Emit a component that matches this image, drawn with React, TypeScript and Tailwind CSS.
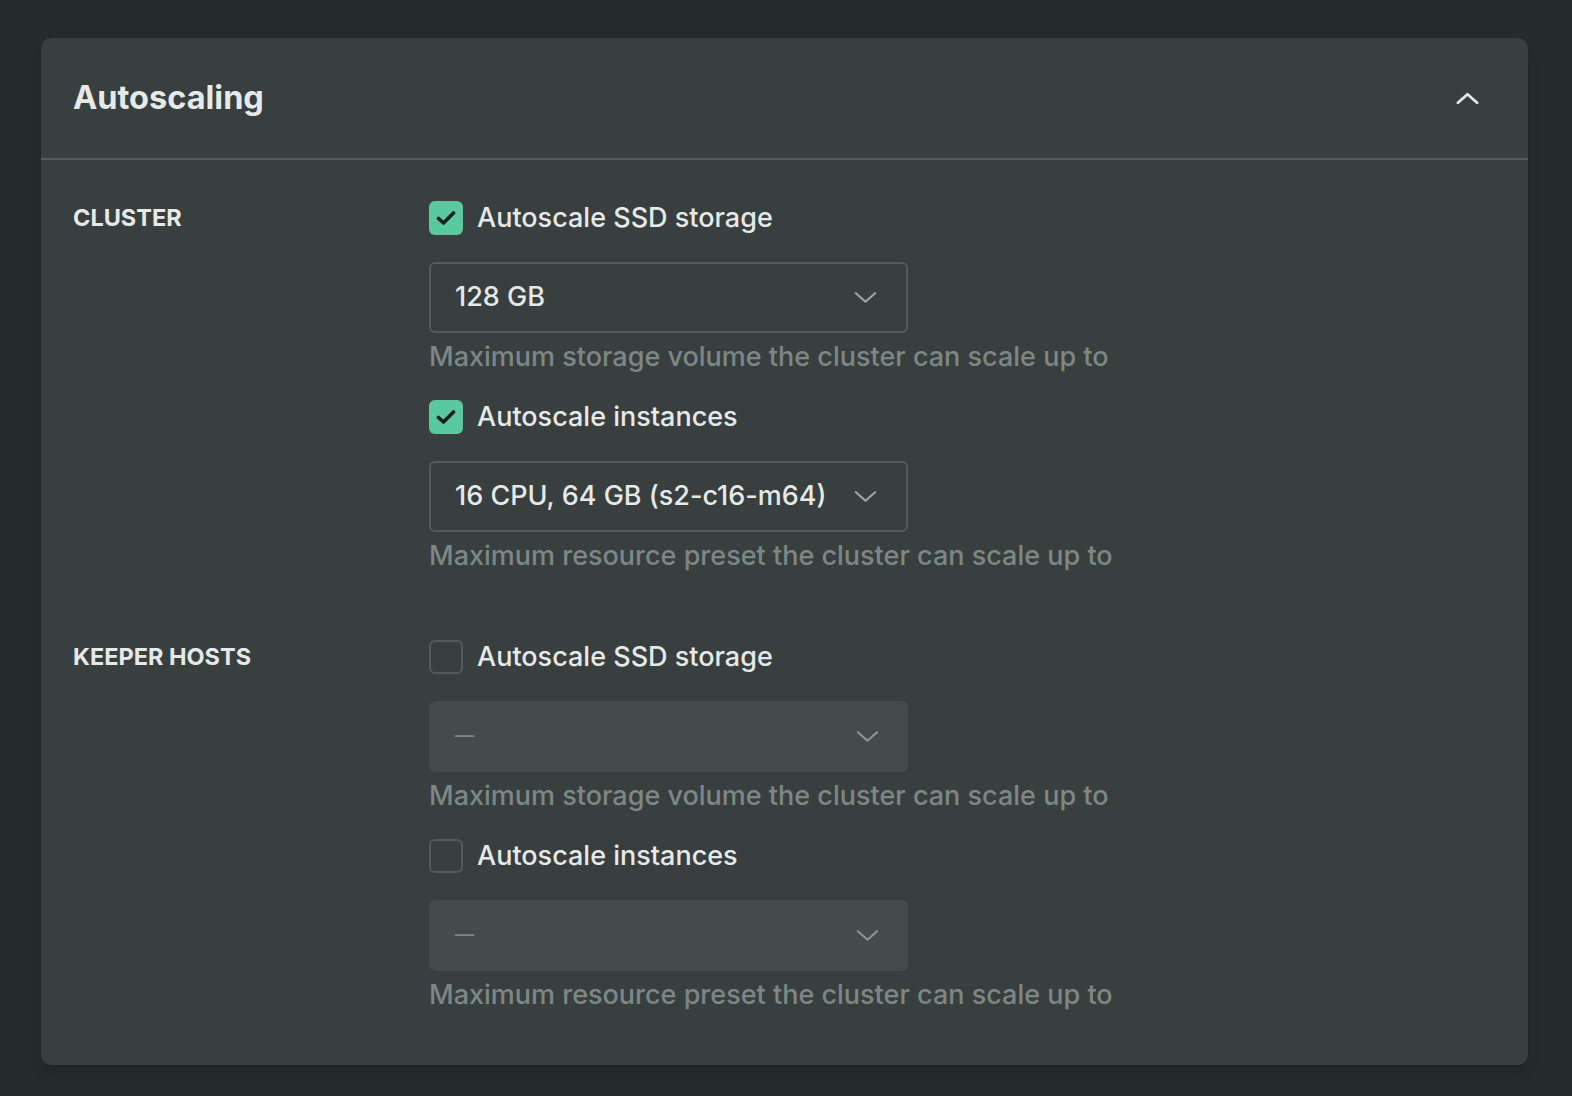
import React, { useState } from 'react';

type Field = {
  label: string;
  checked: boolean;
  value: string;
  hint: string;
};

const sections: { title: string; fields: Field[] }[] = [
  {
    title: 'Cluster',
    fields: [
      { label: 'Autoscale SSD storage', checked: true, value: '128 GB', hint: 'Maximum storage volume the cluster can scale up to' },
      { label: 'Autoscale instances', checked: true, value: '16 CPU, 64 GB (s2-c16-m64)', hint: 'Maximum resource preset the cluster can scale up to' },
    ],
  },
  {
    title: 'Keeper hosts',
    fields: [
      { label: 'Autoscale SSD storage', checked: false, value: '—', hint: 'Maximum storage volume the cluster can scale up to' },
      { label: 'Autoscale instances', checked: false, value: '—', hint: 'Maximum resource preset the cluster can scale up to' },
    ],
  },
];

const Chevron: React.FC<{ up?: boolean; className?: string; strokeWidth?: number }> = ({ up, className, strokeWidth = 2 }) => (
  <svg viewBox="0 0 24 12" className={className} fill="none" stroke="currentColor" strokeWidth={strokeWidth} strokeLinecap="round" strokeLinejoin="round">
    {up ? <polyline points="2,11 12,2 22,11" /> : <polyline points="2,1 12,10 22,1" />}
  </svg>
);

const FieldRow: React.FC<{ field: Field }> = ({ field }) => {
  const [checked, setChecked] = useState(field.checked);

  return (
    <div className="flex flex-col">
      <label className="flex items-center gap-[14px] h-[34px] cursor-pointer" onClick={() => setChecked(!checked)}>
        <span
          className={
            checked
              ? 'w-[34px] h-[34px] rounded-[6px] bg-[#5ac99f] flex items-center justify-center'
              : 'w-[34px] h-[34px] rounded-[6px] border-2 border-[#535a5a] flex items-center justify-center'
          }
        >
          {checked && (
            <svg viewBox="0 0 20 16" className="w-[20px] h-[16px]" fill="none" stroke="#1b2020" strokeWidth={3.6} strokeLinecap="round" strokeLinejoin="round">
              <polyline points="2.5,8.5 7.5,13 17.5,3" />
            </svg>
          )}
        </span>
        <span className="text-[27px] font-medium text-[#e6e9e9]">{field.label}</span>
      </label>

      {checked ? (
        <div className="mt-[27px] w-[479px] h-[71px] rounded-[6px] border-2 border-[#555c5c] flex items-center justify-between pl-[24px] pr-[29px]">
          <span className="text-[27px] font-medium text-[#e6e9e9]">{field.value}</span>
          <Chevron className="w-[23px] h-[12px] text-[#a0a8a7]" strokeWidth={2.2} />
        </div>
      ) : (
        <div className="mt-[27px] w-[479px] h-[71px] rounded-[6px] bg-[#444b4b] flex items-center justify-between pl-[26px] pr-[29px]">
          <span className="text-[19px] font-medium text-[#7f8887]">{field.value}</span>
          <Chevron className="w-[23px] h-[12px] text-[#8d9594]" strokeWidth={2.2} />
        </div>
      )}

      <p className="mt-[7px] text-[27px] font-medium leading-[34px] text-[#7d8786]">{field.hint}</p>
    </div>
  );
};

export default function App() {
  const [open, setOpen] = useState(true);

  return (
    <div className="min-h-[1096px] bg-[#252a2a] pl-[41px] pr-[44px] pt-[38px] pb-[32px] font-['Inter','Noto_Sans',sans-serif]">
      <div className="bg-[#383f3e] rounded-[10px] shadow-lg">
        {/* Header */}
        <div className="h-[122px] flex items-center justify-between pl-[32px] pr-[49px] border-b-2 border-[#575d5d]">
          <h2 className="text-[32.5px] font-bold text-[#e6e9e9]">Autoscaling</h2>
          <button onClick={() => setOpen(!open)} className="text-[#e6e9e9] flex items-center">
            <Chevron up className="w-[23px] h-[12px]" strokeWidth={2.8} />
          </button>
        </div>

        {/* Body */}
        {open && (
          <div className="px-[32px] pt-[41px] pb-[53px] flex flex-col gap-[67px]">
            {sections.map((section) => (
              <div key={section.title} className="flex">
                <div className="w-[356px] shrink-0 h-[34px] flex items-center">
                  <span className="text-[23.5px] font-bold uppercase text-[#e6e9e9]">{section.title}</span>
                </div>
                <div className="flex flex-col gap-[26px]">
                  {section.fields.map((field, i) => (
                    <FieldRow key={i} field={field} />
                  ))}
                </div>
              </div>
            ))}
          </div>
        )}
      </div>
    </div>
  );
}
